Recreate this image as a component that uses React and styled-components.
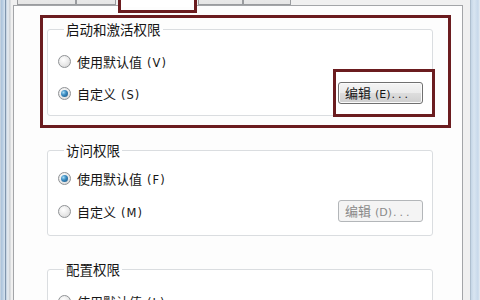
import React from "react";
import styled, { createGlobalStyle } from "styled-components";

const Global = createGlobalStyle`
  html, body { margin: 0; padding: 0; }
  body {
    width: 480px; height: 300px; overflow: hidden; background: #f0f0f0;
    font-family: "Noto Sans CJK SC", "Noto Sans", sans-serif;
  }
`;

const Frame = styled.div`
  display: flex;
  width: 480px;
  height: 300px;
  overflow: hidden;
  background: #f0f0f0;
`;

const WindowEdge = styled.div`
  flex: none;
  width: ${p => p.$w}px;
  background: ${p => p.$bg};
`;

const Main = styled.div`
  flex: 1;
  display: flex;
  flex-direction: column;
  min-width: 0;
`;

const TabStrip = styled.div`
  position: relative;
  z-index: 2;
  height: 5px;
  display: flex;
  align-items: flex-end;
  padding-left: 4px;
`;

const Tab = styled.div`
  position: relative;
  flex: none;
  width: ${p => p.$w}px;
  height: ${p => (p.$selected ? 30 : 25)}px;
  margin-left: ${p => p.$ml || 0}px;
  margin-bottom: ${p => (p.$selected ? -2 : 0)}px;
  box-sizing: border-box;
  border: 1px solid #9a9c9f;
  border-bottom: ${p => (p.$selected ? "none" : "1px solid #9a9c9f")};
  background: ${p => (p.$selected ? "#ffffff" : "linear-gradient(#f3f3f3, #e6e6e6)")};
  ${p =>
    p.$selected &&
    `
    &::after {
      content: "";
      position: absolute;
      left: -2px; right: -3px; top: -4px; bottom: -6px;
      border: 3px solid #6b1c1f;
    }
  `}
`;

const Panel = styled.div`
  flex: 1;
  margin-right: 7px;
  border: 1px solid #a3a5a8;
  border-bottom: none;
  background: #fdfdfd;
  padding: 9px 0 0 26px;
  display: flex;
  flex-direction: column;
  align-items: flex-start;
`;

const Highlight = styled.div`
  border: 3px solid #6b1c1f;
  padding: 3px 15px 9px 4px;
`;

const Group = styled.fieldset`
  box-sizing: border-box;
  width: 386px;
  margin: ${p => p.$mt || 0}px 0 0 ${p => p.$ml || 0}px;
  padding: ${p => p.$pt}px 9px ${p => p.$pb}px 10px;
  border: 1px solid #dadde0;
  border-radius: 3px;
  background: #ffffff;
  display: flex;
  flex-direction: column;
  gap: ${p => p.$gap || 0}px;
  min-width: 0;
`;

const Legend = styled.legend`
  margin-left: 6px;
  padding: 0 2px;
  font-size: 13.5px;
  line-height: 16px;
  height: 16px;
  color: #141414;
  white-space: nowrap;
`;

const Row = styled.div`
  display: flex;
  align-items: center;
  justify-content: space-between;
  height: ${p => p.$h || 20}px;
`;

const RadioLabel = styled.label`
  display: flex;
  align-items: center;
  gap: 6px;
  font-size: 13px;
  color: #161616;
  white-space: nowrap;
`;

const Radio = styled.span`
  position: relative;
  flex: none;
  width: 13px;
  height: 13px;
  box-sizing: border-box;
  border-radius: 50%;
  border: 1px solid #8f9295;
  background: radial-gradient(circle at 40% 35%, #ffffff 0%, #e8e8e8 55%, #cfcfcf 100%);
  &::after {
    content: "";
    display: ${p => (p.$checked ? "block" : "none")};
    position: absolute;
    left: 2px; top: 2px;
    width: 7px; height: 7px;
    border-radius: 50%;
    background: radial-gradient(circle at 35% 35%, #a6dcf5 0%, #3b8cc2 40%, #17507c 100%);
  }
`;

const Mnemonic = styled.span`
  font-family: "DejaVu Sans", sans-serif;
  font-size: 11.5px;
  margin-left: 5px;
  letter-spacing: 1px;
`;

const ButtonWrap = styled.div`
  position: relative;
  display: flex;
`;

const Button = styled.button`
  box-sizing: border-box;
  width: 85px;
  height: 22px;
  padding: 0 0 0 6px;
  text-align: left;
  font-family: inherit;
  font-size: 13px;
  line-height: 20px;
  white-space: nowrap;
  border-radius: 3px;
  border: 1px solid ${p => (p.disabled ? "#b3b6b9" : "#707070")};
  color: ${p => (p.disabled ? "#8a8a8a" : "#161616")};
  background: ${p =>
    p.disabled
      ? "#f4f4f4"
      : "linear-gradient(#f4f4f4 0%, #ebebeb 50%, #dddddd 51%, #cfcfcf 100%)"};
  box-shadow: inset 0 0 0 1px ${p => (p.disabled ? "#f4f4f4" : "#fbfbfb")};
`;

const ButtonKey = styled.span`
  font-family: "DejaVu Sans", sans-serif;
  font-size: 11px;
  margin-left: 4px;
`;

const Dots = styled.span`
  font-family: "DejaVu Sans", sans-serif;
  font-size: 11px;
  letter-spacing: 3px;
  margin-left: 1px;
`;

const Annotation = styled.span`
  position: absolute;
  left: -5px; right: -12px; top: -13px; bottom: -13px;
  border: 3px solid #6b1c1f;
  pointer-events: none;
`;

const RadioItem = ({ checked, label, m }) => (
  <RadioLabel>
    <Radio $checked={checked} />
    <span>
      {label}
      <Mnemonic>({m})</Mnemonic>
    </span>
  </RadioLabel>
);

const EditButton = ({ disabled, k }) => (
  <Button disabled={disabled}>
    编辑<ButtonKey>({k})</ButtonKey>
    <Dots>...</Dots>
  </Button>
);

export default function App() {
  return (
    <>
      <Global />
      <Frame>
        <WindowEdge
          $w={13}
          $bg="linear-gradient(to right, #dfe3e8 0px, #a9c1d9 1px, #bcd0e4 3px, #d6e3ef 5px, #7f95ad 5.5px, #c9d6e3 6.5px, #e9eef3 8px, #c8ccd0 10px, #f0f0f0 11px)"
        />
        <Main>
          <TabStrip>
            <Tab $w={59} />
            <Tab $w={40} />
            <Tab $w={76} $ml={3} $selected />
            <Tab $w={45} $ml={3} />
            <Tab $w={48} />
          </TabStrip>
          <Panel>
            <Highlight>
              <Group $pt={14} $pb={11} $gap={11}>
                <Legend>启动和激活权限</Legend>
                <Row>
                  <RadioItem label="使用默认值" m="V" />
                </Row>
                <Row $h={22}>
                  <RadioItem checked label="自定义" m="S" />
                  <ButtonWrap>
                    <EditButton k="E" />
                    <Annotation />
                  </ButtonWrap>
                </Row>
              </Group>
            </Highlight>
            <Group $mt={14} $ml={7} $pt={10} $pb={13} $gap={12}>
              <Legend>访问权限</Legend>
              <Row>
                <RadioItem checked label="使用默认值" m="F" />
              </Row>
              <Row $h={22}>
                <RadioItem label="自定义" m="M" />
                <ButtonWrap>
                  <EditButton disabled k="D" />
                </ButtonWrap>
              </Row>
            </Group>
            <Group $mt={25} $ml={7} $pt={14} $pb={12} $gap={12}>
              <Legend>配置权限</Legend>
              <Row>
                <RadioItem checked={false} label="使用默认值" m="L" />
              </Row>
              <Row $h={22}>
                <RadioItem label="自定义" m="C" />
              </Row>
            </Group>
          </Panel>
        </Main>
        <WindowEdge
          $w={10}
          $bg="linear-gradient(to right, #9aa9b8 0px, #c4d5e6 1px, #d9e5f1 4px, #c7d8ea 8px, #e6ecf2 10px)"
        />
      </Frame>
    </>
  );
}
